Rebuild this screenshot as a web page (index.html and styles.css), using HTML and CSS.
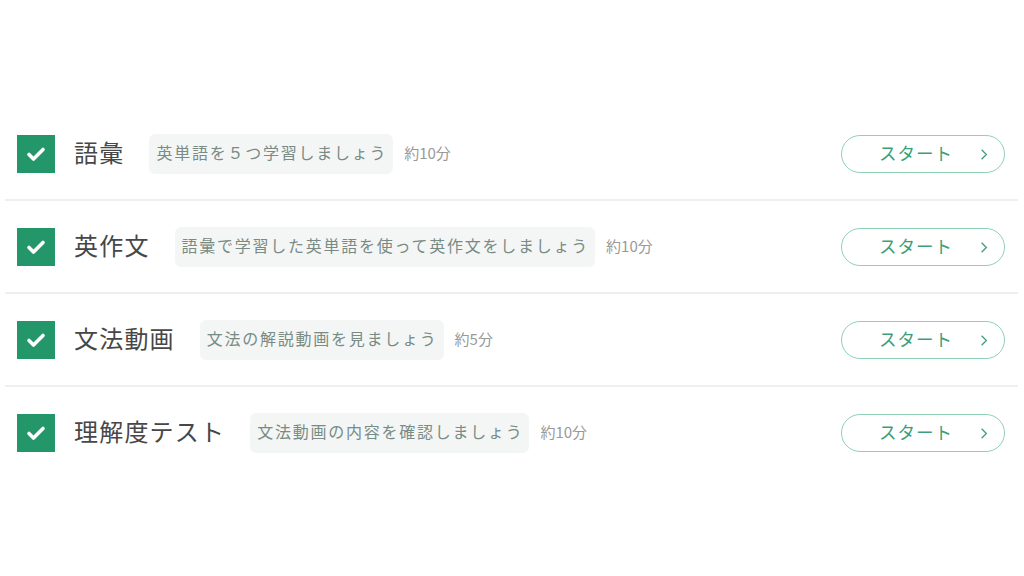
FILE: index.html
```html
<!DOCTYPE html>
<html lang="ja">

<head>
    <meta charset="UTF-8">
    <meta name="viewport" content="width=device-width, initial-scale=1" />
    <title>今日の学習</title>
    <link rel="stylesheet" href="styles.css">
</head>

<body>

    <ul class="steps">

        <li class="step">
            <span class="check">
                <svg viewBox="0 0 24 24" width="24" height="24"><path d="M5 12.5l4.5 4.5L19 7.5" /></svg>
            </span>
            <span class="step-title">語彙</span>
            <span class="step-desc">英単語を５つ学習しましょう</span>
            <span class="step-time">約10分</span>
            <a class="start" href="#">スタート<svg viewBox="0 0 10 16" width="8" height="13"><path d="M2 2l6 6-6 6" /></svg></a>
        </li>

        <li class="step">
            <span class="check">
                <svg viewBox="0 0 24 24" width="24" height="24"><path d="M5 12.5l4.5 4.5L19 7.5" /></svg>
            </span>
            <span class="step-title">英作文</span>
            <span class="step-desc">語彙で学習した英単語を使って英作文をしましょう</span>
            <span class="step-time">約10分</span>
            <a class="start" href="#">スタート<svg viewBox="0 0 10 16" width="8" height="13"><path d="M2 2l6 6-6 6" /></svg></a>
        </li>

        <li class="step">
            <span class="check">
                <svg viewBox="0 0 24 24" width="24" height="24"><path d="M5 12.5l4.5 4.5L19 7.5" /></svg>
            </span>
            <span class="step-title">文法動画</span>
            <span class="step-desc">文法の解説動画を見ましょう</span>
            <span class="step-time">約5分</span>
            <a class="start" href="#">スタート<svg viewBox="0 0 10 16" width="8" height="13"><path d="M2 2l6 6-6 6" /></svg></a>
        </li>

        <li class="step">
            <span class="check">
                <svg viewBox="0 0 24 24" width="24" height="24"><path d="M5 12.5l4.5 4.5L19 7.5" /></svg>
            </span>
            <span class="step-title">理解度テスト</span>
            <span class="step-desc">文法動画の内容を確認しましょう</span>
            <span class="step-time">約10分</span>
            <a class="start" href="#">スタート<svg viewBox="0 0 10 16" width="8" height="13"><path d="M2 2l6 6-6 6" /></svg></a>
        </li>

    </ul>

</body>

</html>
```

FILE: styles.css
```css
:root {
    --green: #23966a;
    --line-color: #efefef;
}

body {
    background-color: #fff;
    font-family: 'Noto Sans CJK JP', 'Noto Sans', sans-serif;
    margin: 0;
}

/* ====== STEP LIST ====== */

.steps {
    list-style: none;
    margin: 0;
    padding: 108px 6px 0 5px;
}

.step {
    align-items: center;
    border-bottom: 2px solid var(--line-color);
    display: flex;
    height: 40px;
    padding: 26px 13px 25px 12px;
}

.step:last-child {
    border-bottom: none;
}

.check {
    align-items: center;
    background-color: var(--green);
    display: flex;
    flex-shrink: 0;
    height: 38px;
    justify-content: center;
    width: 38px;
}

.check path {
    fill: none;
    stroke: #fff;
    stroke-linecap: round;
    stroke-linejoin: round;
    stroke-width: 3.6;
}

.step-title {
    color: #474747;
    font-size: 24px;
    letter-spacing: 1.2px;
    margin-bottom: 5px;
    margin-left: 19px;
}

.step-desc {
    background-color: #f4f6f5;
    border-radius: 6px;
    color: #788b85;
    font-size: 16px;
    letter-spacing: 1.75px;
    line-height: 36px;
    margin-left: 25px;
    padding: 0 6px 4px 7px;
}

.step-time {
    color: #999;
    font-size: 15px;
    margin-bottom: 3px;
    margin-left: 11px;
}

/* ----------------- START BUTTON ----------------- */

.start {
    align-items: center;
    border: 1px solid #8fd1b5;
    border-radius: 20px;
    box-sizing: border-box;
    color: #3d9f7a;
    display: flex;
    font-size: 17.5px;
    height: 38px;
    justify-content: center;
    letter-spacing: 1px;
    margin-left: auto;
    padding: 0 14px 4px 0;
    position: relative;
    text-decoration: none;
    width: 164px;
}

.start svg {
    position: absolute;
    right: 16px;
    top: 12px;
}

.start path {
    fill: none;
    stroke: #3d9f7a;
    stroke-width: 1.6;
}
```
